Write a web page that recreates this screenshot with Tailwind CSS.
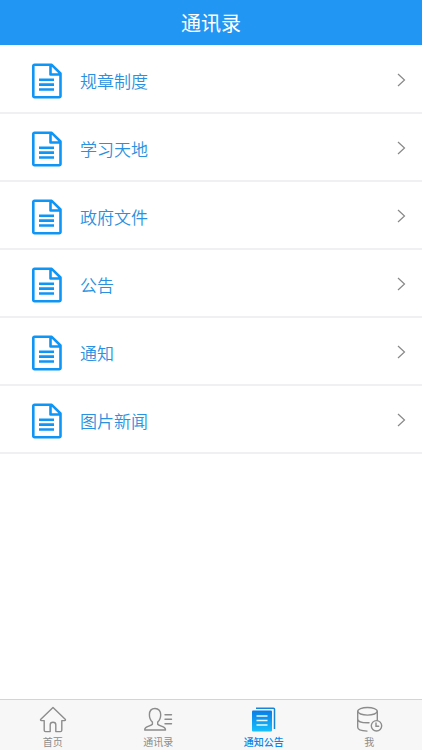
<!DOCTYPE html>
<html lang="zh-CN">
<head>
<meta charset="utf-8">
<meta name="viewport" content="width=device-width, initial-scale=1">
<title>通讯录</title>
<script src="https://cdn.jsdelivr.net/npm/@tailwindcss/browser@4"></script>
</head>
<body class="flex min-h-screen flex-col bg-white font-['Noto_Sans_CJK_SC',sans-serif]">
<svg class="hidden" aria-hidden="true">
  <symbol id="doc" viewBox="0 0 30 36">
    <path d="M2.500 1.800h17.200l8.800 8.700v22.500a1.200 1.200 0 0 1-1.200 1.200H2.500a1.200 1.200 0 0 1-1.200-1.200V3a1.200 1.200 0 0 1 1.200-1.200zM18.500 2v9.500h9.500" fill="none" stroke="currentColor" stroke-width="2.600" stroke-linejoin="round"/>
    <path d="M7 16.700h15M7 21.600h15M7 26.500h15" fill="none" stroke="currentColor" stroke-width="2.600"/>
  </symbol>
  <symbol id="chevron" viewBox="0 0 9 14">
    <path d="M1 1l6.500 6L1 13" fill="none" stroke="currentColor" stroke-width="1.200"/>
  </symbol>
</svg>
<header class="flex h-[45px] items-center justify-center bg-[#2196f3]">
  <h1 class="text-xl leading-6 text-white">通讯录</h1>
</header>
<main class="flex-1 pt-px">
  <ul class="text-[17px] leading-6 font-[350] text-[#2a91e0]">
    <li><a href="#" class="flex h-[68px] items-center border-b-2 border-[#f0f0f3] pt-1 pr-4 pl-8"><svg class="h-9 w-[30px] text-[#0f95f5]"><use href="#doc"/></svg><span class="ml-[18px] flex-1">规章制度</span><svg class="mb-[2px] h-3.5 w-[9px] text-[#888]"><use href="#chevron"/></svg></a></li>
    <li><a href="#" class="flex h-[68px] items-center border-b-2 border-[#f0f0f3] pt-1 pr-4 pl-8"><svg class="h-9 w-[30px] text-[#0f95f5]"><use href="#doc"/></svg><span class="ml-[18px] flex-1">学习天地</span><svg class="mb-[2px] h-3.5 w-[9px] text-[#888]"><use href="#chevron"/></svg></a></li>
    <li><a href="#" class="flex h-[68px] items-center border-b-2 border-[#f0f0f3] pt-1 pr-4 pl-8"><svg class="h-9 w-[30px] text-[#0f95f5]"><use href="#doc"/></svg><span class="ml-[18px] flex-1">政府文件</span><svg class="mb-[2px] h-3.5 w-[9px] text-[#888]"><use href="#chevron"/></svg></a></li>
    <li><a href="#" class="flex h-[68px] items-center border-b-2 border-[#f0f0f3] pt-1 pr-4 pl-8"><svg class="h-9 w-[30px] text-[#0f95f5]"><use href="#doc"/></svg><span class="ml-[18px] flex-1">公告</span><svg class="mb-[2px] h-3.5 w-[9px] text-[#888]"><use href="#chevron"/></svg></a></li>
    <li><a href="#" class="flex h-[68px] items-center border-b-2 border-[#f0f0f3] pt-1 pr-4 pl-8"><svg class="h-9 w-[30px] text-[#0f95f5]"><use href="#doc"/></svg><span class="ml-[18px] flex-1">通知</span><svg class="mb-[2px] h-3.5 w-[9px] text-[#888]"><use href="#chevron"/></svg></a></li>
    <li><a href="#" class="flex h-[68px] items-center border-b-2 border-[#f0f0f3] pt-1 pr-4 pl-8"><svg class="h-9 w-[30px] text-[#0f95f5]"><use href="#doc"/></svg><span class="ml-[18px] flex-1">图片新闻</span><svg class="mb-[2px] h-3.5 w-[9px] text-[#888]"><use href="#chevron"/></svg></a></li>
  </ul>
</main>
<nav class="grid grid-cols-4 border-t border-[#d4d4d4] bg-[#f7f7f7] pt-1.5 text-[10px] leading-4 text-[#8c8c8c]">
  <a href="#" class="flex flex-col items-center">
    <svg class="h-7 w-8" viewBox="0 0 32 28" fill="none" stroke="currentColor" stroke-width="1.400" stroke-linejoin="round" stroke-linecap="round"><path d="M16 1.500L3.800 13.300c-.6.700-.2 1.300.6 1.300h2.800v9.600c0 .9.500 1.400 1.400 1.400h4.600v-6.800c0-1.600 1.100-2.600 2.800-2.600s2.800 1 2.800 2.600v6.800h4.600c.9 0 1.400-.5 1.400-1.400v-9.600h2.800c.8 0 1.200-.6.600-1.300z"/></svg>
    <span>首页</span>
  </a>
  <a href="#" class="flex flex-col items-center">
    <svg class="h-7 w-8" viewBox="0 0 32 28" fill="none" stroke="currentColor" stroke-width="1.400" stroke-linejoin="round" stroke-linecap="round"><path d="M13 2.500c-3.600 0-5.600 2.600-5.600 6.300 0 3.200 1.100 5.600 3 7.200v2.200c-1 1.200-4.700 2.200-6.600 3.400-.8.600-1.100 1.300-1.100 2.400h20.800c0-1.100-.3-1.800-1.100-2.400-1.900-1.200-5.700-2.200-6.700-3.400V16c1.900-1.600 3-4 3-7.200 0-3.700-2-6.300-5.700-6.300z"/><path d="M23 8.800h6.500M23 13.300h6.500M23 17.800h6.500"/></svg>
    <span>通讯录</span>
  </a>
  <a href="#" aria-current="page" class="flex flex-col items-center font-medium text-[#0f84e8]">
    <svg class="h-7 w-8" viewBox="0 0 32 28" fill="none"><defs><linearGradient id="book" x1="0" y1="0" x2="0" y2="1"><stop stop-color="#087de6"/><stop offset="1" stop-color="#18c0fb"/></linearGradient></defs><rect x="4" y="4.500" width="20" height="21" rx="1" fill="url(#book)"/><path d="M8 2.200h17.500a1 1 0 0 1 1 1V23" stroke="#1685d5" stroke-width="1.500"/><path d="M8.500 10h11M8.500 14.500h11M8.500 19h11" stroke="#e9faff" stroke-width="1.400"/></svg>
    <span>通知公告</span>
  </a>
  <a href="#" class="flex flex-col items-center">
    <svg class="h-7 w-8" viewBox="0 0 32 28" fill="none" stroke="currentColor" stroke-width="1.400" stroke-linecap="round"><ellipse cx="14.500" cy="5.300" rx="9.800" ry="3.800"/><path d="M4.700 5.300v16c0 2 3.700 3.600 9.300 3.800M24.300 5.300v9M4.700 13c0 2.200 4 3.800 9.800 3.800h1.500"/><circle cx="23.500" cy="19.800" r="5.200"/><path d="M23 17v3.200h2.700"/></svg>
    <span>我</span>
  </a>
</nav>
</body>
</html>
